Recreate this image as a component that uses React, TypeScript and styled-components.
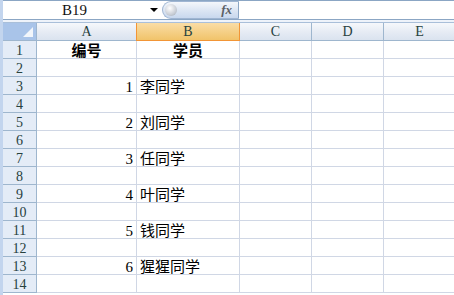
import React from 'react'
import styled, { createGlobalStyle } from 'styled-components'

const gridLine = '#d0d7e5';
const headBorder = '#9eb6ce';
const headText = '#27413e';
const asciiFont = '"Liberation Serif", "DejaVu Serif"';

const Global = createGlobalStyle`
  html, body {
    margin: 0;
    padding: 0;
    background: #ffffff;
    overflow: hidden;
  }
`

const Sheet = styled.div`
  width: 454px;
  height: 295px;
  overflow: hidden;
  box-sizing: border-box;
  border-left: 3px solid #c3d5ee;
  background: #fff;
  display: flex;
  flex-direction: column;
`

const FormulaBar = styled.div`
  display: flex;
  height: 20px;
  box-sizing: border-box;
  border-top: 1px solid #8ba6c4;
  border-bottom: 1px solid #8ba6c4;
  background: #fff;
`

const NameBox = styled.div`
  position: relative;
  width: 159px;
  display: flex;
  align-items: center;
  justify-content: center;
  font-family: ${asciiFont}, serif;
  font-size: 15px;
  color: #111;
  padding-right: 16px;
  box-sizing: border-box;
`

const Caret = styled.span`
  position: absolute;
  right: 4px;
  top: 7px;
  width: 0;
  height: 0;
  border-left: 4px solid transparent;
  border-right: 4px solid transparent;
  border-top: 4px solid #000;
`

const FxPill = styled.div`
  width: 77px;
  box-sizing: border-box;
  border: 1px solid #9fb5d2;
  border-right: 1px solid #8ba6c4;
  border-radius: 10px 0 0 10px;
  background: linear-gradient(#f4f7fb, #dbe5f3 55%, #c8d8ee);
  display: flex;
  align-items: center;
  justify-content: space-between;
  padding: 0 6px 0 2px;
`

const Knob = styled.span`
  width: 12px;
  height: 12px;
  border-radius: 50%;
  background: radial-gradient(circle at 40% 35%, #ffffff, #c9ced6 60%, #9aa3ae);
`

const Fx = styled.span`
  font-family: "Liberation Serif", serif;
  font-style: italic;
  font-weight: bold;
  font-size: 13px;
  color: #5b5f66;
`

const FormulaInput = styled.div`
  flex: 1;
  background: #fff;
`

const Gap = styled.div`
  height: 2px;
  background: #eef3fa;
  border-bottom: 1px solid #a9bfd9;
`

const Grid = styled.div`
  display: grid;
  grid-template-columns: 34px 100px 103px 72px 72px 72px;
  grid-auto-rows: 18px;
`

const Corner = styled.div`
  position: relative;
  box-sizing: border-box;
  background: #a9c4e9;
  border-right: 1px solid ${headBorder};
  border-bottom: 1px solid ${headBorder};
  &::after {
    content: '';
    position: absolute;
    right: 3px;
    bottom: 3px;
    width: 0;
    height: 0;
    border-left: 10px solid transparent;
    border-bottom: 10px solid #f2f6fb;
  }
`

const ColHead = styled.div<{ $active?: boolean }>`
  box-sizing: border-box;
  display: flex;
  align-items: center;
  justify-content: center;
  padding-top: 1px;
  font-family: ${asciiFont}, serif;
  font-size: 14px;
  color: ${headText};
  background: ${p => p.$active
    ? 'linear-gradient(#f9dda6, #f1c36a)'
    : 'linear-gradient(#f6f8fb, #e4eaf3 60%, #dae3ef)'};
  border-right: 1px solid ${p => p.$active ? '#f29536' : headBorder};
  border-bottom: 1px solid ${p => p.$active ? '#f29536' : headBorder};
  ${p => p.$active ? 'border-left: 1px solid #f29536; margin-left: -1px;' : ''}
`

const RowHead = styled.div`
  box-sizing: border-box;
  display: flex;
  align-items: center;
  justify-content: center;
  padding-top: 2px;
  font-family: ${asciiFont}, serif;
  font-size: 14px;
  color: ${headText};
  background: #e4ecf7;
  border-right: 1px solid ${headBorder};
  border-bottom: 1px solid ${headBorder};
`

const Cell = styled.div<{ $align?: 'left' | 'right' | 'center'; $bold?: boolean }>`
  box-sizing: border-box;
  display: flex;
  align-items: center;
  justify-content: ${p => p.$align === 'right' ? 'flex-end' : p.$align === 'center' ? 'center' : 'flex-start'};
  padding: 2px 3px 0;
  font-family: ${asciiFont}, "Noto Sans CJK SC", serif;
  font-size: 15px;
  line-height: 16px;
  font-weight: ${p => p.$bold ? 'bold' : 'normal'};
  color: #000;
  white-space: nowrap;
  overflow: hidden;
  border-right: 1px solid ${gridLine};
  border-bottom: 1px solid ${gridLine};
`

const students = ['李同学', '刘同学', '任同学', '叶同学', '钱同学', '猩猩同学'];

const rows: { a: string; b: string; head?: boolean }[] = [
  { a: '编号', b: '学员', head: true },
];
students.forEach((s, i) => {
  rows.push({ a: '', b: '' });
  rows.push({ a: String(i + 1), b: s });
});
rows.push({ a: '', b: '' });

export default function App() {
  return (
    <Sheet>
      <Global />
      <FormulaBar>
        <NameBox>
          B19
          <Caret />
        </NameBox>
        <FxPill>
          <Knob />
          <Fx>fx</Fx>
        </FxPill>
        <FormulaInput />
      </FormulaBar>
      <Gap />
      <Grid>
        <Corner />
        <ColHead>A</ColHead>
        <ColHead $active>B</ColHead>
        <ColHead>C</ColHead>
        <ColHead>D</ColHead>
        <ColHead>E</ColHead>
        {rows.map((r, i) => (
          <React.Fragment key={i}>
            <RowHead>{i + 1}</RowHead>
            <Cell $align={r.head ? 'center' : 'right'} $bold={r.head}>{r.a}</Cell>
            <Cell $align={r.head ? 'center' : 'left'} $bold={r.head}>{r.b}</Cell>
            <Cell />
            <Cell />
            <Cell />
          </React.Fragment>
        ))}
      </Grid>
    </Sheet>
  )
}
